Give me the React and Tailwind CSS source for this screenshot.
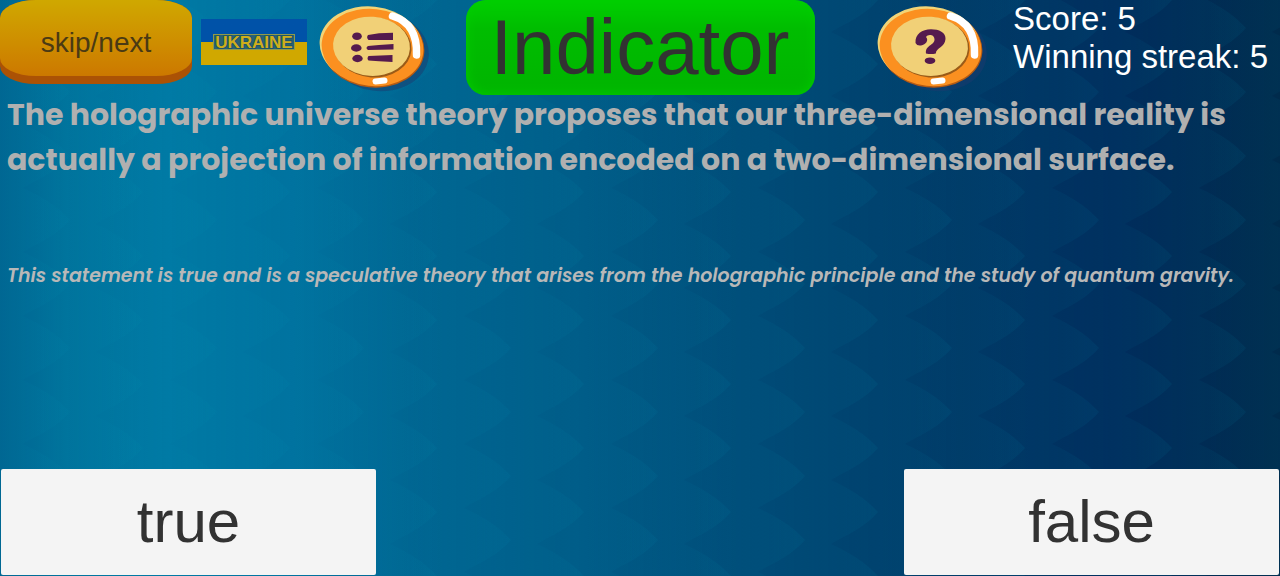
import React from "react";

function ScaleColumn({ x, y }) {
  return [-128, -64, 0, 64, 128].map((dy) => (
    <path
      key={dy}
      transform={`translate(${x} ${y + dy})`}
      d="M0 0C-12 -13 -27 -23 -47 -32H-110V32H-47C-40 27 -14 17 0 0Z"
      fill="url(#scaleTint)"
    />
  ));
}

function Backdrop() {
  return (
    <svg className="absolute inset-0 h-full w-full" aria-hidden="true">
      <defs>
        <linearGradient id="sea" x1="0" x2="1" y1="0" y2="0">
          <stop offset="0" stopColor="#006692" />
          <stop offset="0.05" stopColor="#00739c" />
          <stop offset="0.13" stopColor="#0079a4" />
          <stop offset="0.23" stopColor="#00729f" />
          <stop offset="0.32" stopColor="#006692" />
          <stop offset="0.45" stopColor="#005c88" />
          <stop offset="0.6" stopColor="#004a76" />
          <stop offset="0.75" stopColor="#003a67" />
          <stop offset="0.87" stopColor="#002d5d" />
          <stop offset="0.93" stopColor="#002c56" />
          <stop offset="1" stopColor="#002b4c" />
        </linearGradient>
        <linearGradient id="scaleTint" x1="0" x2="1" y1="0" y2="0">
          <stop offset="0" stopColor="#0090b0" stopOpacity="0" />
          <stop offset="1" stopColor="#0090b0" stopOpacity="0.09" />
        </linearGradient>
        <pattern id="scales" width="147" height="64" patternUnits="userSpaceOnUse">
          <ScaleColumn x={70} y={28} />
          <ScaleColumn x={143} y={0} />
          <ScaleColumn x={217} y={28} />
        </pattern>
      </defs>
      <rect width="100%" height="100%" fill="url(#sea)" />
      <rect width="100%" height="100%" fill="url(#scales)" />
    </svg>
  );
}

function Coin({ children }) {
  return (
    <svg viewBox="0 0 112 94" className="h-[94px] w-[112px]" aria-hidden="true">
      <ellipse cx="59" cy="51" rx="51" ry="40" fill="#1b3a6d" opacity="0.5" transform="rotate(8 59 51)" />
      <ellipse cx="54" cy="48" rx="51.500" ry="39.500" fill="#b65a12" transform="rotate(6 54 48)" />
      <ellipse cx="52" cy="45.500" rx="51.500" ry="39" fill="#f1d477" transform="rotate(6 52 45.500)" />
      <ellipse cx="53.500" cy="47.500" rx="51" ry="38.500" fill="#fb9020" transform="rotate(6 53.500 47.500)" />
      <ellipse cx="54" cy="47.500" rx="38.500" ry="30" fill="#9a5b18" transform="rotate(4 54 47.500)" />
      <ellipse cx="52.500" cy="46.300" rx="38.500" ry="29.600" fill="#f1d077" transform="rotate(4 52.500 46.300)" />
      <path d="M73.500 16C90 21 98.500 33 97.500 55" fill="none" stroke="#fff" strokeWidth="7.500" strokeLinecap="round" />
      <path d="M56.500 81.500L65.500 80.500" stroke="#fff" strokeWidth="6" strokeLinecap="round" />
      {children}
    </svg>
  );
}

function MenuCoin() {
  return (
    <Coin>
      <g fill="#551a4e">
        <ellipse cx="38" cy="36.300" rx="4.800" ry="3.800" />
        <ellipse cx="37.300" cy="48" rx="5.300" ry="3.700" />
        <ellipse cx="38.500" cy="58.500" rx="5.200" ry="3.700" />
        <path d="M49 35L60 33.300L74 32.800V40H49.500Q47 37.500 49 35Z" />
        <path d="M49 46L60 45L74.500 44V49.500L49 50Q46 48 49 46Z" />
        <path d="M49.500 56L73.500 55V62L60 61.300L49.500 60.500Q47.500 58.500 49.500 56Z" />
      </g>
    </Coin>
  );
}

function HelpCoin() {
  return (
    <Coin>
      <path
        d="M38.500 43C38 34 45 29.300 54 29.300C62 29.300 69 32.500 68.500 39C68 47.500 59 47.500 58.800 53.500Q54 54.500 49 53.500C48 45 57.500 45.500 57.500 39.500C57.500 34 50.500 34 49 37C52 40 49 45 44 45.400Q40 46 38.500 43Z"
        fill="#551a4e"
      />
      <ellipse cx="53" cy="60.700" rx="5.300" ry="3.300" fill="#551a4e" />
    </Coin>
  );
}

function AnswerButton({ children }) {
  return (
    <button
      type="button"
      className="h-[106px] w-[375px] max-w-[45%] rounded-xs bg-[#f4f4f4] text-[60px] leading-none text-[#323232]"
    >
      {children}
    </button>
  );
}

export default function App() {
  return (
    <div className="relative isolate flex min-h-screen flex-col overflow-hidden bg-[#005a86] font-['Liberation_Sans',Arial,sans-serif]">
      <div className="absolute inset-0 -z-10">
        <Backdrop />
      </div>

      <header className="grid grid-cols-[1fr_auto_1fr] items-start">
        <div className="flex items-start">
          <button
            type="button"
            className="h-[84px] w-48 rounded-[36px/18px] bg-[#ab5205] pb-2 text-[28px] text-[#4a3a14]"
          >
            <span className="flex h-full items-center justify-center rounded-[36px/18px] bg-linear-to-b from-[#cfa800] to-[#cc7800] pt-2.5">
              skip/next
            </span>
          </button>
          <button
            type="button"
            className="mt-[19px] ml-[9px] flex h-[46px] w-[106px] items-center justify-center bg-linear-to-b from-[#0052a8] from-50% to-[#d0a800] to-50%"
          >
            <span className="flex h-4 items-center border border-[#8f9a4a] bg-[#2a6274] px-px text-[17px] leading-none font-bold text-[#cfae1a] [-webkit-text-stroke:2px_#1d5568] [paint-order:stroke_fill]">
              UKRAINE
            </span>
          </button>
          <button type="button" aria-label="Menu" className="ml-3">
            <MenuCoin />
          </button>
        </div>

        <div className="flex h-[95px] w-[349px] items-center justify-center rounded-[20px] bg-linear-to-b from-[#00d000] via-[#00bd00] via-30% to-[#00b400] pb-0.5 text-[78px] leading-none text-[#323232] shadow-[inset_0_0_12px_#00cc00]">
          Indicator
        </div>

        <div className="flex items-start justify-end pr-3">
          <button type="button" aria-label="Help">
            <HelpCoin />
          </button>
          <div className="ml-6 text-[33px] leading-[38px] whitespace-nowrap text-white">
            <p>Score: 5</p>
            <p>Winning streak: 5</p>
          </div>
        </div>
      </header>

      <main className="-mt-[3px] flex-1 px-[7px] font-['Poppins','Inter',sans-serif] text-[#b0b0b0]">
        <h1 className="text-[30px] leading-[45px] font-bold">
          The holographic universe theory proposes that our three-dimensional reality is actually a
          projection of information encoded on a two-dimensional surface.
        </h1>
        <p className="mt-[79px] text-[19px] leading-[30px] font-semibold text-[#b8b8b8] italic">
          This statement is true and is a speculative theory that arises from the holographic
          principle and the study of quantum gravity.
        </p>
      </main>

      <footer className="flex justify-between p-px">
        <AnswerButton>true</AnswerButton>
        <AnswerButton>false</AnswerButton>
      </footer>
    </div>
  );
}
